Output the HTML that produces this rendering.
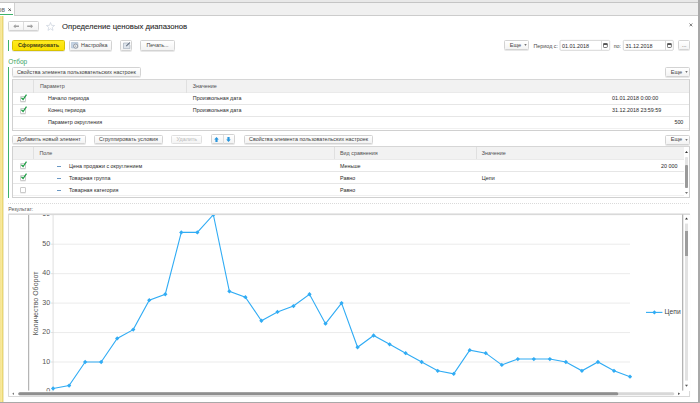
<!DOCTYPE html>
<html><head><meta charset="utf-8">
<style>
*{margin:0;padding:0;box-sizing:border-box}
html,body{width:700px;height:403px;overflow:hidden;background:#fff;font-family:"Liberation Sans",sans-serif;color:#2a2a2a}
.a{position:absolute}
.t{position:absolute;white-space:nowrap;font-size:5.38px;line-height:6px}
.btn{position:absolute;border:1px solid #d3d3d3;border-radius:1.5px;background:linear-gradient(#ffffff,#f3f3f3);box-shadow:0 0.6px 0.6px rgba(0,0,0,.18);font-size:5.38px;color:#3c3c3c;display:flex;align-items:center;justify-content:center;white-space:nowrap;line-height:6px}
.hdr{position:absolute;background:#f2f2f2}
.hl{position:absolute;height:1px;background:#e6e6e6}
.vl{position:absolute;width:1px}
</style></head><body>

<!-- top strip -->
<div class="a" style="left:0;top:0;width:700px;height:2px;background:#e8e8e8"></div>
<div class="a" style="left:0;top:2px;width:700px;height:1px;background:#c4c4c4"></div>
<div class="a" style="left:0;top:3px;width:700px;height:12px;background:#f0f0f0"></div>
<div class="a" style="left:0;top:15px;width:700px;height:1px;background:#cccccc"></div>
<!-- active tab -->
<div class="a" style="left:0;top:3px;width:14px;height:12.5px;background:#fff"></div>
<div class="a" style="left:14px;top:3px;width:1px;height:12.5px;background:#d0d0d0"></div>
<div class="a" style="left:0;top:13.8px;width:13px;height:1.1px;background:#3db26b"></div>
<div class="t" style="left:-2.2px;top:5.6px;color:#666;font-size:6.6px;line-height:7px">ов</div>
<svg class="a" style="left:8px;top:7.6px" width="3.4" height="3.4" viewBox="0 0 4 4"><path d="M0.5 0.5 L3.5 3.5 M3.5 0.5 L0.5 3.5" stroke="#333" stroke-width="0.9"/></svg>

<!-- left yellow strip, right border, bottom -->
<div class="a" style="left:0;top:15.8px;width:4.4px;height:387px;background:linear-gradient(to right,#f5e391 0,#f7e799 1.4px,#fcee9f 1.9px,#e8d46c 2.6px,#e6d98f 3.1px,#f1edd2 3.6px,#fff 4.4px)"></div>
<div class="a" style="left:698px;top:0;width:2px;height:403px;background:#a9a9a9"></div>
<div class="a" style="left:0;top:401.5px;width:700px;height:1.5px;background:#a9a9a9"></div>

<!-- nav buttons -->
<div class="btn" style="left:8.1px;top:21px;width:30.9px;height:9.8px"></div>
<div class="a" style="left:23.2px;top:21.6px;width:0.6px;height:8.4px;background:#dddddd"></div>
<svg class="a" style="left:13px;top:23.6px" width="6.4" height="4.6" viewBox="0 0 6.4 4.6"><path d="M0.3 2.3 L2.6 0.2 V1.5 H6.2 V3.1 H2.6 V4.4 Z" fill="#a0a0a0"/></svg>
<svg class="a" style="left:27.4px;top:23.6px" width="6.4" height="4.6" viewBox="0 0 6.4 4.6"><path d="M6.1 2.3 L3.8 0.2 V1.5 H0.2 V3.1 H3.8 V4.4 Z" fill="#a0a0a0"/></svg>
<!-- star -->
<svg class="a" style="left:46px;top:21.5px" width="9" height="9" viewBox="0 0 10 10"><path d="M5 0.6 L6.2 3.7 L9.5 3.9 L7 6 L7.8 9.3 L5 7.5 L2.2 9.3 L3 6 L0.5 3.9 L3.8 3.7 Z" fill="none" stroke="#c6ced8" stroke-width="0.7"/></svg>
<!-- title -->
<div class="t" style="left:62px;top:22.5px;font-size:7.7px;line-height:8px;color:#1e1e1e;-webkit-text-stroke:0.08px #1e1e1e">Определение ценовых диапазонов</div>
<!-- close -->
<svg class="a" style="left:689.3px;top:23px" width="3.8" height="3.8" viewBox="0 0 4 4"><path d="M0.5 0.5 L3.5 3.5 M3.5 0.5 L0.5 3.5" stroke="#555" stroke-width="0.8"/></svg>

<!-- toolbar -->
<div class="a" style="left:8.2px;top:40px;width:1px;height:11px;background:#3db26b"></div>
<div class="btn" style="left:12.4px;top:39.6px;width:52.2px;height:11px;background:linear-gradient(#ffea20,#fae000);border-color:#d8c200;font-weight:bold;color:#403c18;font-size:5.4px;padding-top:0.4px">Сформировать</div>
<div class="btn" style="left:68.6px;top:39.6px;width:43.2px;height:11px;justify-content:flex-start;padding-left:11.5px">Настройка</div>
<svg class="a" style="left:70.8px;top:41.8px" width="8" height="7" viewBox="0 0 8 7"><rect x="0.3" y="0.3" width="6.6" height="5.7" rx="0.6" fill="#c5d3e4" stroke="#a3b6cd" stroke-width="0.5"/><circle cx="4.7" cy="4.1" r="2.1" fill="#f4f4f4" stroke="#7f8792" stroke-width="0.8"/><circle cx="4.7" cy="4.1" r="0.6" fill="#7f8792"/></svg>
<div class="btn" style="left:120.2px;top:39.6px;width:12.3px;height:11px"></div>
<svg class="a" style="left:122.5px;top:41.8px" width="8" height="7" viewBox="0 0 8 7"><path d="M0.5 1 H4.8 L6.9 3 V6.6 H0.5Z" fill="#dfe5ec" stroke="#9aa6b6" stroke-width="0.6"/><path d="M3.2 4.2 L6.9 0.5" stroke="#6b7788" stroke-width="1.1"/></svg>
<div class="btn" style="left:140.4px;top:39.6px;width:34.2px;height:11px">Печать...</div>

<div class="btn" style="left:504.3px;top:39.7px;width:24.4px;height:10.6px"></div><div class="t" style="left:509.8px;top:41.8px;font-size:5.6px;color:#444">Еще</div><svg class="a" style="left:523.9px;top:44.0px" width="3" height="2" viewBox="0 0 3 2"><path d="M0.3 0.3 H2.7 L1.5 1.7Z" fill="#444"/></svg>
<div class="t" style="left:533.5px;top:42.5px;color:#4a4a4a">Период с:</div>
<svg class="a" style="left:559px;top:39px" width="52" height="13"><rect x="1" y="1.4" width="49.7" height="9.9" rx="1" fill="#fff" stroke="#cdcdcd" stroke-width="0.8"/></svg>
<div class="t" style="left:562px;top:42.5px">01.01.2018</div>
<div class="a" style="left:601px;top:40.3px;width:0.6px;height:9.6px;background:#dadada"></div>
<svg class="a" style="left:603.3px;top:43px" width="5" height="5" viewBox="0 0 5 5"><rect x="0.45" y="0.6" width="3.9" height="3.9" rx="0.7" fill="none" stroke="#555" stroke-width="0.8"/><rect x="0.2" y="0.3" width="4.4" height="1.6" rx="0.6" fill="#555"/></svg>
<div class="t" style="left:613.7px;top:42.5px;color:#4a4a4a">по:</div>
<svg class="a" style="left:622px;top:39px" width="53" height="13"><rect x="1.3" y="1.4" width="50" height="9.9" rx="1" fill="#fff" stroke="#cdcdcd" stroke-width="0.8"/></svg>
<div class="t" style="left:625.5px;top:42.5px">31.12.2018</div>
<div class="a" style="left:664.5px;top:40.3px;width:0.6px;height:9.6px;background:#dadada"></div>
<svg class="a" style="left:666.8px;top:43px" width="5" height="5" viewBox="0 0 5 5"><rect x="0.45" y="0.6" width="3.9" height="3.9" rx="0.7" fill="none" stroke="#555" stroke-width="0.8"/><rect x="0.2" y="0.3" width="4.4" height="1.6" rx="0.6" fill="#555"/></svg>
<div class="btn" style="left:678.3px;top:39.8px;width:12px;height:10.6px">...</div>

<!-- Отбор -->
<div class="t" style="left:8.2px;top:59px;font-size:6.5px;line-height:6.5px;color:#3aa55f">Отбор</div>
<div class="a" style="left:8.2px;top:66.8px;width:1px;height:131.2px;background:#3db26b"></div>

<div class="btn" style="left:12.2px;top:67.2px;width:128.4px;height:10.3px">Свойства элемента пользовательских настроек</div>
<div class="btn" style="left:665.3px;top:67.3px;width:24.5px;height:10.2px"></div><div class="t" style="left:670.8px;top:69.2px;font-size:5.6px;color:#444">Еще</div><svg class="a" style="left:684.9px;top:71.4px" width="3" height="2" viewBox="0 0 3 2"><path d="M0.3 0.3 H2.7 L1.5 1.7Z" fill="#444"/></svg>

<!-- table 1 -->
<div class="a" style="left:12.2px;top:79.2px;width:677.8px;height:51.5px;border:1px solid #d0d0d0;border-top-color:#d6d6d6;background:#fff"></div>
<div class="hdr" style="left:13.4px;top:80px;width:675.6px;height:12.5px"></div>
<div class="a" style="left:13.4px;top:92.3px;width:675.6px;height:0.7px;background:#eaeaea"></div>
<div class="vl" style="left:33px;top:80px;height:12.5px;background:#e0e0e0"></div>
<div class="vl" style="left:186.3px;top:80px;height:12.5px;background:#e0e0e0"></div>
<div class="t" style="left:40px;top:83px;color:#505050">Параметр</div>
<div class="t" style="left:192.8px;top:83px;color:#505050">Значение</div>
<div class="hl" style="left:13.4px;top:104.2px;width:675.6px"></div>
<div class="hl" style="left:13.4px;top:116px;width:675.6px"></div>
<div class="hl" style="left:13.4px;top:127.6px;width:675.6px;background:#f0f0f0"></div>
<div class="t" style="left:48px;top:95.2px">Начало периода</div>
<div class="t" style="left:192.8px;top:95.2px">Произвольная дата</div>
<div class="t" style="left:612px;top:95.2px">01.01.2018 0:00:00</div>
<div class="t" style="left:48px;top:107.2px">Конец периода</div>
<div class="t" style="left:192.8px;top:107.2px">Произвольная дата</div>
<div class="t" style="left:612px;top:107.2px">31.12.2018 23:59:59</div>
<div class="t" style="left:48px;top:119.2px">Параметр округления</div>
<div class="t" style="left:674.4px;top:119.2px">500</div>

<!-- buttons row 2 -->
<div class="btn" style="left:12.4px;top:134.5px;width:73.2px;height:9.8px">Добавить новый элемент</div>
<div class="btn" style="left:93.7px;top:134.5px;width:69.7px;height:9.8px">Сгруппировать условия</div>
<div class="btn" style="left:171.4px;top:134.5px;width:30.9px;height:9.8px;color:#b8b8b8;box-shadow:none;border-color:#e0e0e0">Удалить</div>
<div class="btn" style="left:211.1px;top:134.3px;width:24.2px;height:10.1px"></div>
<div class="a" style="left:223.1px;top:135px;width:0.6px;height:8.6px;background:#dedede"></div>
<svg class="a" style="left:214.4px;top:137px" width="5" height="5" viewBox="0 0 5 5"><path d="M2.5 0.1 L4.8 2.5 H3.6 V4.9 H1.4 V2.5 H0.2 Z" fill="#2a96dc"/></svg>
<svg class="a" style="left:226.4px;top:137px" width="5" height="5" viewBox="0 0 5 5"><path d="M2.5 4.9 L4.8 2.5 H3.6 V0.1 H1.4 V2.5 H0.2 Z" fill="#2a96dc"/></svg>
<div class="btn" style="left:244.2px;top:134.5px;width:128.7px;height:9.8px">Свойства элемента пользовательских настроек</div>
<div class="btn" style="left:665.3px;top:134.5px;width:24.5px;height:10.1px"></div><div class="t" style="left:670.8px;top:136.4px;font-size:5.6px;color:#444">Еще</div><svg class="a" style="left:684.9px;top:138.6px" width="3" height="2" viewBox="0 0 3 2"><path d="M0.3 0.3 H2.7 L1.5 1.7Z" fill="#444"/></svg>

<!-- table 2 -->
<div class="a" style="left:12.2px;top:146.2px;width:677.8px;height:52.2px;border:1px solid #d0d0d0;border-top-color:#d6d6d6;background:#fff"></div>
<div class="hdr" style="left:13.2px;top:147.2px;width:670.8px;height:12.2px"></div>
<div class="a" style="left:13.4px;top:159.2px;width:670.6px;height:0.7px;background:#eaeaea"></div>
<div class="vl" style="left:33px;top:147.2px;height:12.2px;background:#e0e0e0"></div>
<div class="vl" style="left:333.8px;top:147.2px;height:12.2px;background:#e0e0e0"></div>
<div class="vl" style="left:475.5px;top:147.2px;height:12.2px;background:#e0e0e0"></div>
<div class="t" style="left:39.4px;top:150.4px;color:#505050">Поле</div>
<div class="t" style="left:340px;top:150.4px;color:#505050">Вид сравнения</div>
<div class="t" style="left:481.8px;top:150.4px;color:#505050">Значение</div>
<div class="hl" style="left:13.4px;top:171.4px;width:670.6px"></div>
<div class="hl" style="left:13.4px;top:183.4px;width:670.6px"></div>
<div class="hl" style="left:13.4px;top:195.4px;width:670.6px;background:#f0f0f0"></div>
<div class="t" style="left:69px;top:162.6px">Цена продажи с округлением</div>
<div class="t" style="left:340px;top:162.6px">Меньше</div>
<div class="t" style="left:661px;top:162.6px">20 000</div>
<div class="t" style="left:69px;top:174.6px">Товарная группа</div>
<div class="t" style="left:340px;top:174.6px">Равно</div>
<div class="t" style="left:481.8px;top:174.6px">Цепи</div>
<div class="t" style="left:69px;top:186.6px">Товарная категория</div>
<div class="t" style="left:340px;top:186.6px">Равно</div>
<!-- dash icons -->
<div class="a" style="left:56.6px;top:165.6px;width:4.4px;height:1.3px;background:#6a98c4"></div>
<div class="a" style="left:56.6px;top:177.6px;width:4.4px;height:1.3px;background:#6a98c4"></div>
<div class="a" style="left:56.6px;top:189.6px;width:4.4px;height:1.3px;background:#6a98c4"></div>
<!-- scrollbar table2 -->
<div class="a" style="left:684px;top:147.6px;width:5px;height:49px;background:#fff"></div>
<div class="a" style="left:685.2px;top:157px;width:2.7px;height:31px;background:#e4e4e4;border-radius:1px"></div>
<div class="a" style="left:685.2px;top:165px;width:2.7px;height:23px;background:#9a9a9a;border-radius:1px"></div>
<svg class="a" style="left:685px;top:150.6px" width="3" height="2" viewBox="0 0 3 2"><path d="M1.5 0 L3 2 H0Z" fill="#333"/></svg>
<svg class="a" style="left:685px;top:192.4px" width="3" height="2" viewBox="0 0 3 2"><path d="M1.5 2 L3 0 H0Z" fill="#777"/></svg>

<!-- checkboxes -->
<div class="a" style="left:19.5px;top:95.8px;width:6.1px;height:6.1px;border:0.6px solid #cbcbcb;border-radius:1px;background:#fff;box-shadow:0 0.4px 0.4px rgba(0,0,0,.12)"></div>
<svg class="a" style="left:19.5px;top:94.3px" width="7" height="7" viewBox="0 0 7 7"><path d="M1.4 3.7 L3.1 5.5 L6.5 0.6" fill="none" stroke="#1f9e46" stroke-width="1.25"/></svg>
<div class="a" style="left:19.5px;top:107.8px;width:6.1px;height:6.1px;border:0.6px solid #cbcbcb;border-radius:1px;background:#fff;box-shadow:0 0.4px 0.4px rgba(0,0,0,.12)"></div>
<svg class="a" style="left:19.5px;top:106.3px" width="7" height="7" viewBox="0 0 7 7"><path d="M1.4 3.7 L3.1 5.5 L6.5 0.6" fill="none" stroke="#1f9e46" stroke-width="1.25"/></svg>
<div class="a" style="left:19.5px;top:162.7px;width:6.1px;height:6.1px;border:0.6px solid #cbcbcb;border-radius:1px;background:#fff;box-shadow:0 0.4px 0.4px rgba(0,0,0,.12)"></div>
<svg class="a" style="left:19.5px;top:161.2px" width="7" height="7" viewBox="0 0 7 7"><path d="M1.4 3.7 L3.1 5.5 L6.5 0.6" fill="none" stroke="#1f9e46" stroke-width="1.25"/></svg>
<div class="a" style="left:19.5px;top:174.7px;width:6.1px;height:6.1px;border:0.6px solid #cbcbcb;border-radius:1px;background:#fff;box-shadow:0 0.4px 0.4px rgba(0,0,0,.12)"></div>
<svg class="a" style="left:19.5px;top:173.2px" width="7" height="7" viewBox="0 0 7 7"><path d="M1.4 3.7 L3.1 5.5 L6.5 0.6" fill="none" stroke="#1f9e46" stroke-width="1.25"/></svg>
<div class="a" style="left:19.5px;top:186.7px;width:6.1px;height:6.1px;border:0.6px solid #cbcbcb;border-radius:1px;background:#fff;box-shadow:0 0.4px 0.4px rgba(0,0,0,.12)"></div>
<!-- result -->
<div class="a" style="left:8.3px;top:203px;width:681.2px;height:0;border-top:0.8px dotted #dadada"></div>
<div class="t" style="left:8.2px;top:205.9px;font-size:5.2px;color:#555">Результат:</div>

<!-- chart frame -->
<svg class="a" style="left:0;top:0" width="700" height="403" viewBox="0 0 700 403">
<g id="chart">
<rect x="8.6" y="214.2" width="681" height="182.3" fill="#fff" stroke="#d4d4d4" stroke-width="0.9"/>
<svg x="9" y="214.6" width="673" height="176.6" viewBox="9 214.6 673 176.6" overflow="hidden">
<line x1="50.8" y1="391.45" x2="53" y2="391.45" stroke="#cfcfcf" stroke-width="0.6"/>
<text x="50.2" y="392.95" font-size="7.1" text-anchor="end" fill="#555">0</text>
<line x1="53" y1="362.00" x2="630" y2="362.00" stroke="#e3e3e3" stroke-width="0.7"/>
<line x1="50.8" y1="362.00" x2="53" y2="362.00" stroke="#cfcfcf" stroke-width="0.6"/>
<text x="50.2" y="363.50" font-size="7.1" text-anchor="end" fill="#555">10</text>
<line x1="53" y1="332.55" x2="630" y2="332.55" stroke="#e3e3e3" stroke-width="0.7"/>
<line x1="50.8" y1="332.55" x2="53" y2="332.55" stroke="#cfcfcf" stroke-width="0.6"/>
<text x="50.2" y="334.05" font-size="7.1" text-anchor="end" fill="#555">20</text>
<line x1="53" y1="303.10" x2="630" y2="303.10" stroke="#e3e3e3" stroke-width="0.7"/>
<line x1="50.8" y1="303.10" x2="53" y2="303.10" stroke="#cfcfcf" stroke-width="0.6"/>
<text x="50.2" y="304.60" font-size="7.1" text-anchor="end" fill="#555">30</text>
<line x1="53" y1="273.65" x2="630" y2="273.65" stroke="#e3e3e3" stroke-width="0.7"/>
<line x1="50.8" y1="273.65" x2="53" y2="273.65" stroke="#cfcfcf" stroke-width="0.6"/>
<text x="50.2" y="275.15" font-size="7.1" text-anchor="end" fill="#555">40</text>
<line x1="53" y1="244.20" x2="630" y2="244.20" stroke="#e3e3e3" stroke-width="0.7"/>
<line x1="50.8" y1="244.20" x2="53" y2="244.20" stroke="#cfcfcf" stroke-width="0.6"/>
<text x="50.2" y="245.70" font-size="7.1" text-anchor="end" fill="#555">50</text>
<line x1="53" y1="214.75" x2="630" y2="214.75" stroke="#e3e3e3" stroke-width="0.7"/>
<line x1="50.8" y1="214.75" x2="53" y2="214.75" stroke="#cfcfcf" stroke-width="0.6"/>
<text x="50.2" y="216.25" font-size="7.1" text-anchor="end" fill="#555">60</text>
<line x1="53.1" y1="213" x2="53.1" y2="392" stroke="#d8d8d8" stroke-width="0.8"/>
<line x1="28.7" y1="213" x2="28.7" y2="390.6" stroke="#8c8c8c" stroke-width="0.8"/>
<text x="0" y="0" font-size="7" fill="#555" text-anchor="middle" transform="translate(37.6 303.5) rotate(-90)">Количество Оборот</text>
<path d="M53.10 388.50 L69.12 385.56 L85.15 362.00 L101.17 362.00 L117.20 338.44 L133.22 329.61 L149.25 300.15 L165.27 294.26 L181.30 232.42 L197.32 232.42 L213.35 214.75 L229.37 291.32 L245.40 297.21 L261.43 320.77 L277.45 311.94 L293.47 306.04 L309.50 294.26 L325.52 323.71 L341.55 303.10 L357.57 347.27 L373.60 335.50 L389.62 344.33 L405.65 353.16 L421.68 362.00 L437.70 370.83 L453.72 373.78 L469.75 350.22 L485.77 353.16 L501.80 364.94 L517.82 359.06 L533.85 359.06 L549.88 359.06 L565.90 362.00 L581.92 370.83 L597.95 362.00 L613.98 370.83 L630.00 376.72" fill="none" stroke="#31acf4" stroke-width="1.1"/>
<path d="M53.10 386.36 L55.25 388.50 L53.10 390.65 L50.95 388.50Z" fill="#31acf4"/>
<path d="M69.12 383.41 L71.28 385.56 L69.12 387.71 L66.97 385.56Z" fill="#31acf4"/>
<path d="M85.15 359.85 L87.30 362.00 L85.15 364.15 L83.00 362.00Z" fill="#31acf4"/>
<path d="M101.17 359.85 L103.33 362.00 L101.17 364.15 L99.02 362.00Z" fill="#31acf4"/>
<path d="M117.20 336.29 L119.35 338.44 L117.20 340.59 L115.05 338.44Z" fill="#31acf4"/>
<path d="M133.22 327.46 L135.38 329.61 L133.22 331.75 L131.07 329.61Z" fill="#31acf4"/>
<path d="M149.25 298.00 L151.40 300.15 L149.25 302.30 L147.10 300.15Z" fill="#31acf4"/>
<path d="M165.27 292.12 L167.42 294.26 L165.27 296.41 L163.12 294.26Z" fill="#31acf4"/>
<path d="M181.30 230.27 L183.45 232.42 L181.30 234.57 L179.15 232.42Z" fill="#31acf4"/>
<path d="M197.32 230.27 L199.47 232.42 L197.32 234.57 L195.17 232.42Z" fill="#31acf4"/>
<path d="M213.35 212.60 L215.50 214.75 L213.35 216.90 L211.20 214.75Z" fill="#31acf4"/>
<path d="M229.37 289.17 L231.52 291.32 L229.37 293.47 L227.22 291.32Z" fill="#31acf4"/>
<path d="M245.40 295.06 L247.55 297.21 L245.40 299.36 L243.25 297.21Z" fill="#31acf4"/>
<path d="M261.43 318.62 L263.57 320.77 L261.43 322.92 L259.28 320.77Z" fill="#31acf4"/>
<path d="M277.45 309.79 L279.60 311.94 L277.45 314.08 L275.30 311.94Z" fill="#31acf4"/>
<path d="M293.47 303.89 L295.62 306.04 L293.47 308.19 L291.32 306.04Z" fill="#31acf4"/>
<path d="M309.50 292.12 L311.65 294.26 L309.50 296.41 L307.35 294.26Z" fill="#31acf4"/>
<path d="M325.52 321.56 L327.67 323.71 L325.52 325.86 L323.38 323.71Z" fill="#31acf4"/>
<path d="M341.55 300.95 L343.70 303.10 L341.55 305.25 L339.40 303.10Z" fill="#31acf4"/>
<path d="M357.57 345.12 L359.72 347.27 L357.57 349.42 L355.43 347.27Z" fill="#31acf4"/>
<path d="M373.60 333.35 L375.75 335.50 L373.60 337.64 L371.45 335.50Z" fill="#31acf4"/>
<path d="M389.62 342.18 L391.77 344.33 L389.62 346.48 L387.48 344.33Z" fill="#31acf4"/>
<path d="M405.65 351.01 L407.80 353.16 L405.65 355.31 L403.50 353.16Z" fill="#31acf4"/>
<path d="M421.68 359.85 L423.82 362.00 L421.68 364.15 L419.53 362.00Z" fill="#31acf4"/>
<path d="M437.70 368.69 L439.85 370.83 L437.70 372.98 L435.55 370.83Z" fill="#31acf4"/>
<path d="M453.72 371.63 L455.87 373.78 L453.72 375.93 L451.57 373.78Z" fill="#31acf4"/>
<path d="M469.75 348.07 L471.90 350.22 L469.75 352.37 L467.60 350.22Z" fill="#31acf4"/>
<path d="M485.77 351.01 L487.92 353.16 L485.77 355.31 L483.62 353.16Z" fill="#31acf4"/>
<path d="M501.80 362.80 L503.95 364.94 L501.80 367.09 L499.65 364.94Z" fill="#31acf4"/>
<path d="M517.82 356.91 L519.97 359.06 L517.82 361.20 L515.67 359.06Z" fill="#31acf4"/>
<path d="M533.85 356.91 L536.00 359.06 L533.85 361.20 L531.70 359.06Z" fill="#31acf4"/>
<path d="M549.88 356.91 L552.02 359.06 L549.88 361.20 L547.73 359.06Z" fill="#31acf4"/>
<path d="M565.90 359.85 L568.05 362.00 L565.90 364.15 L563.75 362.00Z" fill="#31acf4"/>
<path d="M581.92 368.69 L584.07 370.83 L581.92 372.98 L579.77 370.83Z" fill="#31acf4"/>
<path d="M597.95 359.85 L600.10 362.00 L597.95 364.15 L595.80 362.00Z" fill="#31acf4"/>
<path d="M613.98 368.69 L616.12 370.83 L613.98 372.98 L611.83 370.83Z" fill="#31acf4"/>
<path d="M630.00 374.57 L632.15 376.72 L630.00 378.87 L627.85 376.72Z" fill="#31acf4"/>
</svg>
<rect x="8.6" y="213.6" width="681" height="1.4" fill="#d9d9d9"/>
<line x1="646" y1="312.4" x2="662.4" y2="312.4" stroke="#31acf4" stroke-width="1.1"/>
<path d="M654.4 310.25 L656.55 312.4 L654.4 314.54999999999995 L652.25 312.4Z" fill="#31acf4"/>
<text x="664.6" y="313.9" font-size="6.7" fill="#444">Цепи</text>
<rect x="682" y="215" width="8" height="176" fill="#fff"/>
<rect x="682" y="214.5" width="1.3" height="176.1" fill="#b4b4b4"/>
<rect x="685" y="223.6" width="3" height="157" fill="#e2e2e2"/>
<rect x="685" y="231" width="3" height="25" fill="#9d9d9d"/>
<path d="M686.5 217.6 L688 219.6 H685Z" fill="#333"/>
<path d="M686.5 386.8 L688 384.8 H685Z" fill="#555"/>
<rect x="18.3" y="392.3" width="656" height="3" rx="1.5" fill="#d8d8d8"/>
<rect x="18.3" y="392.3" width="600" height="3" rx="1.5" fill="#8f8f8f"/>
<path d="M12.2 393.8 L14 392.5 V395.1Z" fill="#777"/>
<path d="M680 393.8 L678.2 392.5 V395.1Z" fill="#333"/>
</g>
</svg>
</body></html>
